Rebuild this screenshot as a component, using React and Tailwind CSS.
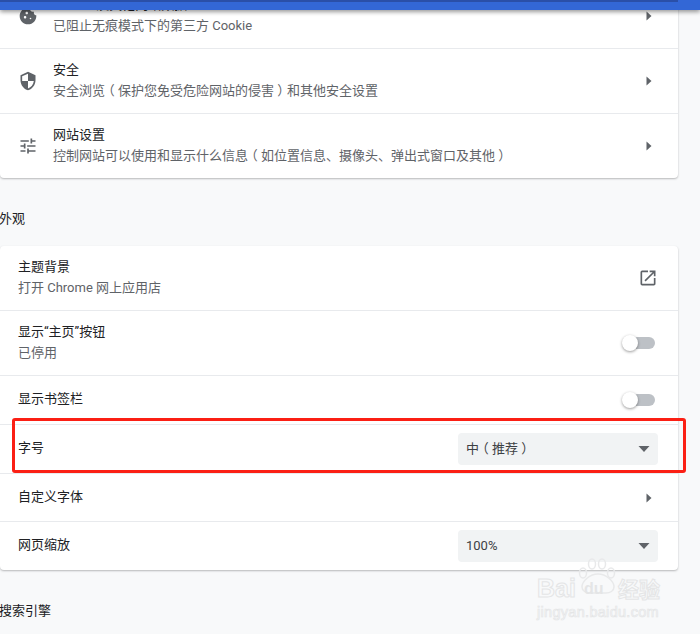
function Arrow() {
  return (
    <svg width="6" height="10" viewBox="0 0 6 10" className="mr-[26px]">
      <path d="M0.5 0.5 L5.5 5 L0.5 9.5 Z" fill="#5f6368" />
    </svg>
  );
}

function Caret() {
  return (
    <svg width="12" height="6" viewBox="0 0 12 6" className="shrink-0">
      <path d="M0.5 0 H11.5 L6 6 Z" fill="#5f6368" />
    </svg>
  );
}

// full-width brackets sit centred in their box in the reference's system font
function Bracket({ children }) {
  return <span className="inline-block w-[13px] text-center [font-feature-settings:'halt']">{children}</span>;
}

function Toggle() {
  return (
    <div className="relative mr-[23px] w-[32px] h-[12px] rounded-full bg-[#bdc1c6]">
      <div className="absolute left-[-1px] top-[-2px] w-[16px] h-[16px] rounded-full bg-white shadow-[0_1px_3px_rgba(0,0,0,0.4)]" />
    </div>
  );
}

function Select({ children }) {
  return (
    <div className="mr-[20px] w-[200px] h-[32px] rounded-[4px] bg-[#f1f3f4] flex items-center justify-between pl-[8px] pr-[8px] text-[13px] text-[#3c4043]">
      <span>{children}</span>
      <Caret />
    </div>
  );
}

function CookieIcon() {
  return (
    <svg width="20" height="20" viewBox="0 0 24 24" fill="#5f6368">
      <path d="M21.95 10.99c-1.79-.03-3.7-1.95-2.68-4.22-2.97 1-5.78-1.59-5.19-4.56C7.11.74 2 6.41 2 12c0 5.52 4.48 10 10 10 5.89 0 10.54-5.08 9.95-11.01zM8.5 15c-.83 0-1.5-.67-1.5-1.5S7.67 12 8.5 12s1.5.67 1.5 1.5S9.33 15 8.5 15zm2-5C9.67 10 9 9.33 9 8.5S9.67 7 10.5 7s1.5.67 1.5 1.5-.67 1.5-1.5 1.5zm4.5 6c-.55 0-1-.45-1-1s.45-1 1-1 1 .45 1 1-.45 1-1 1z" />
    </svg>
  );
}

function ShieldIcon() {
  return (
    <svg width="20" height="20" viewBox="0 0 24 24" fill="#5f6368">
      <path d="M12 1 3 5v6c0 5.55 3.84 10.74 9 12 5.16-1.26 9-6.45 9-12V5l-9-4zm0 10.99h7c-.53 4.12-3.28 7.79-7 8.94V12H5V6.3l7-3.11v8.8z" />
    </svg>
  );
}

function TuneIcon() {
  return (
    <svg width="20" height="20" viewBox="0 0 24 24" fill="#5f6368">
      <path d="M3 17v2h6v-2H3zM3 5v2h10V5H3zm10 16v-2h8v-2h-8v-2h-2v6h2zM7 9v2H3v2h4v2h2V9H7zm14 4v-2H11v2h10zm-6-4h2V7h4V5h-4V3h-2v6z" />
    </svg>
  );
}

function OpenIcon() {
  return (
    <svg width="20" height="20" viewBox="0 0 24 24" fill="#5f6368" className="mr-[20px]">
      <path d="M19 19H5V5h7V3H5a2 2 0 0 0-2 2v14a2 2 0 0 0 2 2h14c1.1 0 2-.9 2-2v-7h-2v7zM14 3v2h3.59l-9.83 9.83 1.41 1.41L19 6.41V10h2V3h-7z" />
    </svg>
  );
}

function Row({ title, desc, icon, right, height, last }) {
  return (
    <div className={`flex items-center justify-between ${last ? "" : "border-b border-[#e8eaed]"} ${height}`}>
      <div className="flex items-center min-w-0">
        {icon && <div className="w-[20px] ml-[18px] mr-[15px] flex justify-center">{icon}</div>}
        <div className={`${desc ? "pb-[1px]" : "pb-[2px]"} ${icon ? "" : "ml-[18px]"}`}>
          <div className="text-[13px] leading-[20px] text-[#202124]">{title}</div>
          {desc && <div className="mt-[1px] text-[13px] leading-[20px] text-[#5f6368]">{desc}</div>}
        </div>
      </div>
      {right}
    </div>
  );
}

export default function App() {
  return (
    <div
      className="relative w-[700px] h-[634px] overflow-hidden bg-[#f8f9fa]"
      style={{ fontFamily: '"Roboto", "Noto Sans CJK SC", sans-serif' }}
    >
      {/* page content, scrolled under the header */}
      <div className="mt-[-16px] w-[678px] flex flex-col">
        <div className="bg-white rounded-b-[4px] shadow-[0_1px_2px_rgba(60,64,67,0.35)]">
          <Row
            height="h-[65px]"
            icon={<CookieIcon />}
            title="Cookie 及其他网站数据"
            desc="已阻止无痕模式下的第三方 Cookie"
            right={<Arrow />}
          />
          <Row
            height="h-[65px]"
            icon={<ShieldIcon />}
            title="安全"
            desc={<>安全浏览<Bracket>（</Bracket>保护您免受危险网站的侵害<Bracket>）</Bracket>和其他安全设置</>}
            right={<Arrow />}
          />
          <Row
            height="h-[64px]"
            last
            icon={<TuneIcon />}
            title="网站设置"
            desc={<>控制网站可以使用和显示什么信息<Bracket>（</Bracket>如位置信息、摄像头、弹出式窗口及其他<Bracket>）</Bracket></>}
            right={<Arrow />}
          />
        </div>

        <div className="h-[68px] flex items-center ml-[-1px] pt-[14px] text-[13px] text-[#202124]">外观</div>

        <div className="bg-white rounded-[4px] shadow-[0_1px_2px_rgba(60,64,67,0.35)]">
          <Row height="h-[65px]" title="主题背景" desc="打开 Chrome 网上应用店" right={<OpenIcon />} />
          <Row height="h-[65px]" title="显示“主页”按钮" desc="已停用" right={<Toggle />} />
          <Row height="h-[49px]" title="显示书签栏" right={<Toggle />} />
          <Row height="h-[49px]" title="字号" right={<Select>中<Bracket>（</Bracket>推荐<Bracket>）</Bracket></Select>} />
          <Row height="h-[48px]" title="自定义字体" right={<Arrow />} />
          <Row height="h-[48px]" last title="网页缩放" right={<Select>100%</Select>} />
        </div>

        <div className="h-[80px] flex items-center ml-[-1px] pt-[2px] text-[13px] text-[#202124]">搜索引擎</div>
      </div>

      {/* blue header bar */}
      <div className="absolute top-0 left-0 w-[700px] h-[10px] bg-[#3367d6] shadow-[0_2px_4px_rgba(0,0,0,0.4)]">
        <div className="w-[678px] h-[2px] bg-[#2a4fa8]" />
      </div>

      {/* red annotation box */}
      <div className="absolute left-[12px] top-[418px] w-[674px] h-[55px] rounded-[3px] border-[3px] border-[#fb1f14]" />

      {/* watermark */}
      <div className="absolute left-[537px] top-[558px] w-[130px] h-[70px] text-[#e8e9ea] font-['Liberation_Sans']">
        <svg width="40" height="36" viewBox="0 0 40 36" className="absolute left-[41px] top-0" fill="none" stroke="currentColor" strokeWidth="1.5">
          <ellipse cx="5" cy="15" rx="3.5" ry="5" />
          <ellipse cx="14" cy="6" rx="3.5" ry="5" />
          <ellipse cx="24" cy="6" rx="3.5" ry="5" />
          <ellipse cx="33" cy="15" rx="3.5" ry="5" />
          <path d="M20 16c-8 0-16 7-16 13 0 4 4 6 8 6h16c4 0 8-2 8-6 0-6-8-13-16-13z" />
        </svg>
        <div className="absolute left-0 top-[17px] text-[25px] leading-[26px] font-bold text-transparent [-webkit-text-stroke:1px_#e4e5e6]">Bai</div>
        <div className="absolute left-[47px] top-[21px] text-[16px] leading-[20px] font-bold text-[#e4e5e6]">du</div>
        <div className="absolute left-[81px] top-[17px] text-[21px] leading-[26px] font-bold text-transparent [-webkit-text-stroke:1px_#e4e5e6] font-['Noto_Sans_CJK_SC']">经验</div>
        <div className="absolute left-0 top-[45px] text-[14.5px] leading-[18px] tracking-[0.3px] whitespace-nowrap text-transparent [-webkit-text-stroke:0.7px_#e4e5e6]">jingyan.baidu.com</div>
      </div>
    </div>
  );
}
